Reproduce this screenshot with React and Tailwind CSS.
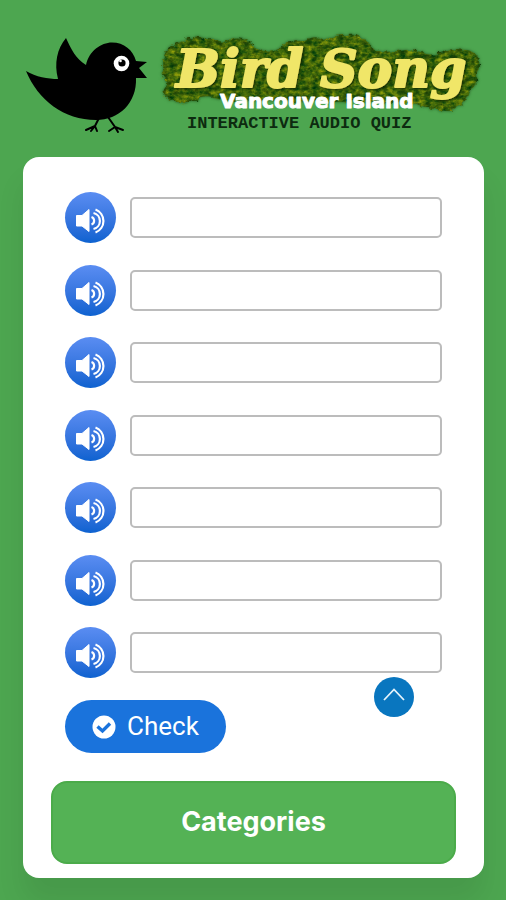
import React from "react";

const CLIPS = [1, 2, 3, 4, 5, 6, 7];

function Logo() {
  return (
    <svg
      viewBox="0 0 506 157"
      className="block w-full"
      role="img"
      aria-label="Bird Song Vancouver Island"
    >
      <defs>
        <filter id="foliage" x="-5%" y="-15%" width="110%" height="130%" colorInterpolationFilters="sRGB">
          <feTurbulence type="fractalNoise" baseFrequency="0.16 0.22" numOctaves="3" seed="8" result="noise" />
          <feColorMatrix
            in="noise"
            type="matrix"
            values="0.9 0 0 0 -0.17  0.6 0 0 0 0.13  0 0 0 0 0.04  0 0 0 0 1"
            result="hue"
          />
          <feColorMatrix
            in="noise"
            type="matrix"
            values="0 0 0 0 0.1  0 0 0 0 0.24  0 0 0 0 0.02  0 2.4 0 0 -1.05"
            result="shade"
          />
          <feMerge result="leaves">
            <feMergeNode in="hue" />
            <feMergeNode in="shade" />
          </feMerge>
          <feDisplacementMap in="SourceGraphic" in2="noise" scale="7" xChannelSelector="R" yChannelSelector="G" result="edge" />
          <feComposite in="leaves" in2="edge" operator="in" result="bush" />
          <feDropShadow in="bush" dx="0" dy="0" stdDeviation="1.500" floodColor="#12300a" floodOpacity="0.700" />
        </filter>
        <filter id="glow" x="-10%" y="-20%" width="120%" height="140%">
          <feDropShadow dx="1" dy="1" stdDeviation="1.200" floodColor="#0c2402" floodOpacity="0.900" />
        </filter>
      </defs>

      <path d="M26 71C36 77 48 79 58 79C54 63 57 49 66 38C71 49 76 59 86 65C89 51 101 42.500 112 42.500C124 42.500 133 50 136 61L147 62L139 68L147 78L136 78C137 103 119 120 96 120C64 120 38 100 26 71Z" />
      <path
        d="M99 118L95 126L86 130M95 126L91 131M95 126L97 131M108 117L115 127L109 131M115 127L118 132M115 127L123 130"
        fill="none"
        stroke="#000"
        strokeWidth="2"
        strokeLinecap="round"
      />
      <circle cx="121.500" cy="63.500" r="7.800" fill="#fff" />
      <circle cx="122" cy="63" r="3.600" />
      <circle cx="120.500" cy="61" r="1.300" fill="#fff" />

      <path
        filter="url(#foliage)"
        d="M163 60Q165 47 178 44Q190 36 205 38Q216 38 222 43Q235 35 249 41Q256 49 265 51Q273 54 282 46Q294 40 304 41Q315 36 324 40Q338 34 355 35Q369 38 372 49Q382 53 398 51Q413 48 426 54Q437 56 447 51Q466 47 475 53Q483 63 476 75Q478 84 470 91Q467 104 458 106Q450 114 436 109Q424 109 415 103L222 100Q210 96 201 98Q190 106 175 102Q161 98 164 88Q170 82 162 76Q164 68 163 60Z"
      />
      <g
        filter="url(#glow)"
        fill="#f0e668"
        stroke="#f0e668"
        strokeWidth="2"
        strokeLinejoin="round"
        fontSize="52"
        className="font-['DejaVu_Serif',serif] font-bold italic"
      >
        <text x="176" y="87">Bird</text>
        <text x="320" y="87">Song</text>
      </g>
      <text
        x="220"
        y="108"
        fill="#fff"
        stroke="#fff"
        strokeWidth="1"
        strokeLinejoin="round"
        fontSize="20"
        className="font-['DejaVu_Sans',sans-serif] font-bold"
      >
        Vancouver Island
      </text>
      <text
        x="187"
        y="128"
        fill="#0d2b10"
        fontSize="17"
        className="font-['Liberation_Mono',monospace] font-bold"
      >
        INTERACTIVE AUDIO QUIZ
      </text>
    </svg>
  );
}

function SpeakerIcon() {
  return (
    <svg viewBox="0 0 51 51" className="size-full" aria-hidden="true">
      <path
        d="M11.500 23.500H17L24 17.500V39.500L17 34H11.500Z"
        fill="#fff"
        stroke="#fff"
        strokeLinejoin="round"
      />
      <g fill="none" stroke="#fff" strokeWidth="2.200">
        <path d="M26.500 25A4 4 0 0 1 26.500 32.500" />
        <path d="M28.500 21A8.200 8.200 0 0 1 28.500 37" />
        <path d="M30.500 17.500A12.300 12.300 0 0 1 30.500 40.500" />
      </g>
    </svg>
  );
}

function QuizRow({ number }) {
  return (
    <div className="flex items-center gap-[14px]">
      <button
        type="button"
        aria-label={`Play ${number}`}
        className="size-[51px] shrink-0 rounded-full bg-linear-to-b from-[#5a8df2] to-[#0c62d0]"
      >
        <SpeakerIcon />
      </button>
      <input
        type="text"
        aria-label={`Answer ${number}`}
        className="h-[41px] min-w-0 flex-1 rounded-[5px] border-2 border-[#bcbcbc] bg-white px-3 font-['Roboto',sans-serif] text-lg"
      />
    </div>
  );
}

export default function App() {
  return (
    <div className="min-h-screen overflow-hidden bg-[#4da650] pb-[22px]">
      <header>
        <Logo />
      </header>
      <main className="relative mr-[22px] ml-[23px] rounded-2xl bg-white px-7 pt-[35px] pb-[14px] shadow-[0_24px_28px_rgba(0,0,0,0.08)]">
        <form className="px-[14px]" onSubmit={(e) => e.preventDefault()}>
          <div className="flex min-h-[486px] flex-col justify-between">
            {CLIPS.map((n) => (
              <QuizRow key={n} number={n} />
            ))}
          </div>
          <button
            type="submit"
            className="mt-[22px] flex h-[53px] w-[161px] items-center justify-center gap-[11px] rounded-full bg-[#1a73dc] font-['Roboto',sans-serif] text-[26px] text-white"
          >
            <svg viewBox="0 0 24 24" className="size-6" aria-hidden="true">
              <circle cx="12" cy="12" r="11.500" fill="#fff" />
              <path d="M5.500 11.500L10.500 16L18 8.500" fill="none" stroke="#1a73dc" strokeWidth="3.400" />
            </svg>
            Check
          </button>
        </form>
        <button
          type="button"
          className="mt-7 h-[83px] w-full rounded-2xl border-2 border-[#4bab4a] bg-[#54b255] font-['Inter',sans-serif] text-[27px] font-bold text-white"
        >
          Categories
        </button>
        <button
          type="button"
          aria-label="Back to top"
          className="absolute right-[70px] bottom-[161px] flex size-10 items-center justify-center rounded-full bg-[#0976bf]"
        >
          <svg viewBox="0 0 40 40" className="size-10" aria-hidden="true">
            <path d="M10 23L20 12.500L30 23" fill="none" stroke="#e6f3fb" strokeWidth="1.800" />
          </svg>
        </button>
      </main>
    </div>
  );
}
